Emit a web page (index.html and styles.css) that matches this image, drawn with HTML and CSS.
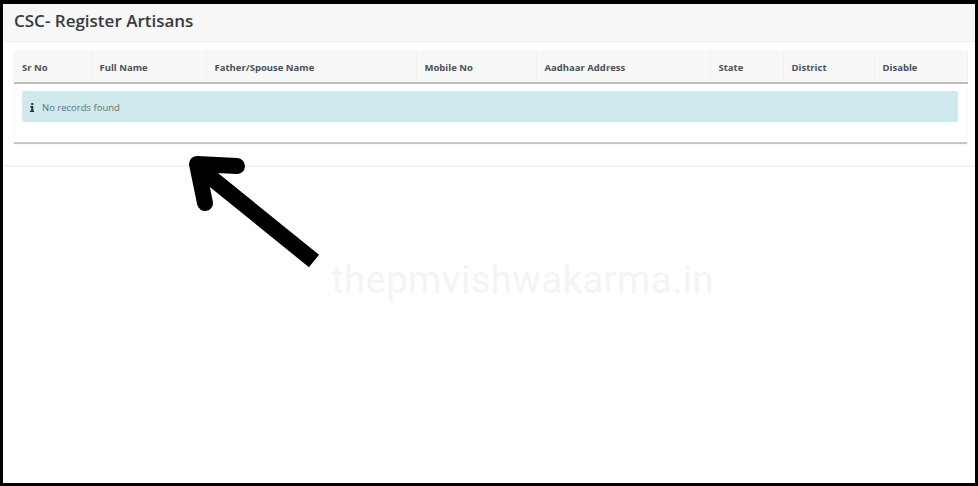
FILE: index.html
```html
<!DOCTYPE html>
<html lang="en">
<head>
<meta charset="utf-8">
<title>CSC- Register Artisans</title>
<link rel="stylesheet" href="styles.css">
</head>
<body>
<div class="frame">
  <section class="panel">
    <header class="panel-head"><h1>CSC- Register Artisans</h1></header>
    <div class="panel-body">
      <div class="card">
        <table class="grid">
          <thead>
            <tr>
              <th class="c-sr">Sr No</th>
              <th class="c-name">Full Name</th>
              <th class="c-father">Father/Spouse Name</th>
              <th class="c-mobile">Mobile No</th>
              <th class="c-addr">Aadhaar Address</th>
              <th class="c-state">State</th>
              <th class="c-district">District</th>
              <th class="c-disable">Disable</th>
            </tr>
          </thead>
        </table>
        <div class="alert">
          <svg class="info" viewBox="0 0 6 12" width="4.5" height="9" aria-hidden="true"><path d="M1.6 0h2.8v2.6H1.6zM.4 4h4v6H6v2H0v-2h1.6V6H.4z" fill="#24383c"/></svg>
          <span>No records found</span>
        </div>
      </div>
    </div>
  </section>
  <div class="watermark">thepmvishwakarma.in</div>
  <svg class="arrow" viewBox="0 0 978 486" width="978" height="486" aria-hidden="true">
    <path d="M314 261 L204 172" fill="none" stroke="#000" stroke-width="16"/>
    <path d="M237 166 L197 164 L205 203" fill="none" stroke="#000" stroke-width="16" stroke-linecap="round" stroke-linejoin="round"/>
  </svg>
</div>
</body>
</html>
```
FILE: styles.css
```css
* { box-sizing: border-box; }
html, body { margin: 0; padding: 0; background: #fff; }
body { width: 978px; height: 486px; overflow: hidden; font-family: "Open Sans", "Liberation Sans", sans-serif; }
.frame { position: relative; width: 978px; height: 486px; border: solid #000; border-width: 4px 3px 3px 3px; background: #fff; overflow: hidden; }
.panel { border-bottom: 2px solid #f3f3f3; }
.panel-head { height: 38px; padding: 0 11px; background: #f7f7f7; border-bottom: 1px solid #ececec; display: flex; align-items: center; }
.panel-head h1 { margin: 0 0 4px; font-size: 17px; font-weight: 600; color: #343a40; line-height: 1; }
.panel-body { padding: 9px 8px 21px 11px; }
.card { border-bottom: 2px solid #c6c6c6; height: 93px; box-shadow: 0 0 2px rgba(0,0,0,.08); }
.grid { width: 953px; border-collapse: collapse; table-layout: fixed; }
.grid th { height: 32px; padding: 2px 8px 0; background: #f8f8f8; border-right: 1px solid #f1f1f1; border-bottom: 2px solid #bdbdbd; text-align: left; font-size: 9.5px; font-weight: 700; color: #495057; white-space: nowrap; }
.c-sr { width: 77px; }
.c-name { width: 115px; }
.c-father { width: 210px; }
.c-mobile { width: 120px; }
.c-addr { width: 174px; }
.c-state { width: 73px; }
.c-district { width: 91px; }
.c-disable { width: 93px; }
.alert { display: flex; align-items: center; gap: 8px; height: 31px; margin: 7px 9px 0 8px; padding: 1px 0 0 7.5px; background: #cfe9ed; border-radius: 2px; font-size: 9.5px; color: #5f7175; }
.info { flex: none; }
.watermark { position: absolute; left: 328px; top: 254px; font-family: Roboto, "Open Sans", sans-serif; font-size: 38px; letter-spacing: 0.55px; line-height: 44px; color: #f4f4f4; white-space: nowrap; }
.arrow { position: absolute; left: -3px; top: -4px; }
```
